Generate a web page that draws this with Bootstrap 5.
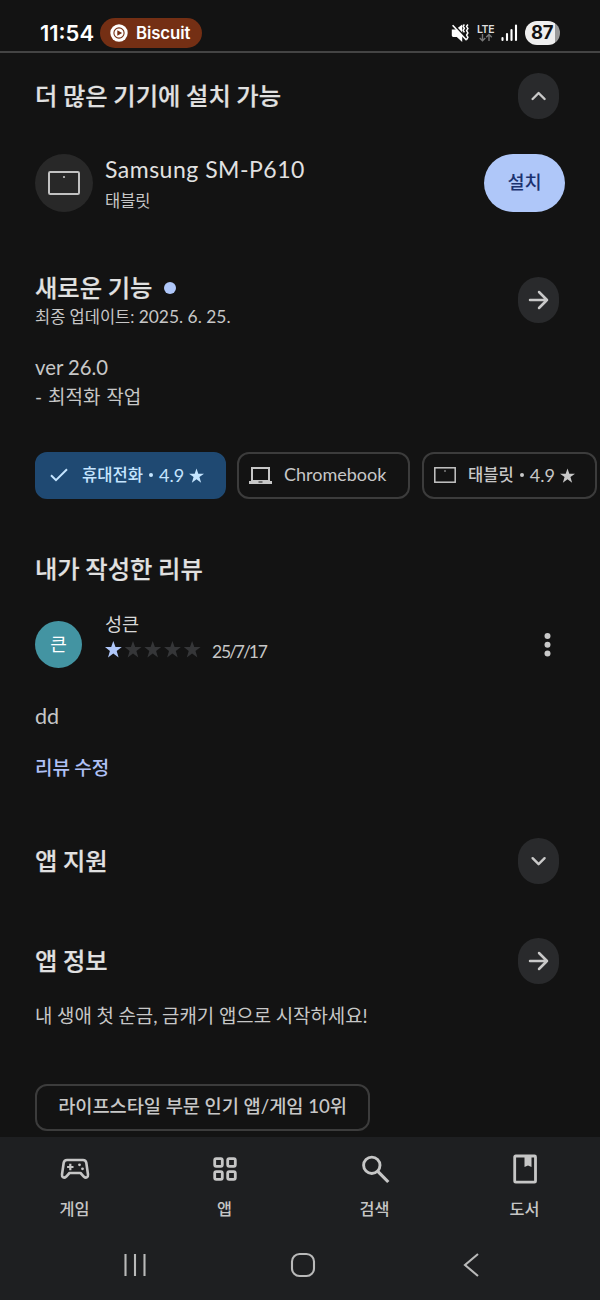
<!DOCTYPE html>
<html lang="ko" data-bs-theme="dark">
<head>
<meta charset="utf-8">
<meta name="viewport" content="width=device-width, initial-scale=1">
<title>앱 상세정보</title>
<link href="https://cdn.jsdelivr.net/npm/bootstrap@5.3.0/dist/css/bootstrap.min.css" rel="stylesheet">
<style>
body{width:600px;height:1300px;overflow:hidden;background:#131313;color:#c7c7c7;font-family:Lato,"Noto Sans CJK KR",sans-serif;white-space:nowrap}
svg{display:block;flex:none}
.statusbar{height:53px;border-bottom:2px solid #444;padding:14px 40px 0 40px;font-family:Inter,sans-serif;color:#fff}
.clock{font-size:22px;font-weight:600;letter-spacing:0;line-height:38px;width:60px}
.live-pill{width:102px;height:30px;margin-top:4px;background:#742f14;font-size:16.8px;font-weight:600;letter-spacing:-.1px;padding-left:10px}
.battery{width:35px;height:24px;margin-top:7px;background:linear-gradient(90deg,#eee 30px,#999 30px);color:#111;font-size:18.5px;font-weight:700;letter-spacing:-.5px;padding-right:1px}
.page-body{height:1084px;padding:0 35px}
.row-head{height:46px;padding-right:6px}
.title-text{font-size:24.3px;font-weight:500;color:#e1e1e1;line-height:32px;margin:0;word-spacing:-.5px;-webkit-text-stroke:.2px #e1e1e1}
.round-btn{width:41px;height:46px;border-radius:20.5px;background:#292a2c;color:#c9c9c9;border:0;padding:0}
.device-icon{width:58px;height:58px;background:#282828}
.device-name{font-size:23px;line-height:32px;letter-spacing:.5px;color:#e1e1e1}
.install{width:81px;height:58px;background:#afc7f9;color:#1c3270;font-size:18.6px;font-weight:500;border:0;padding:0}
.t16{font-size:16.5px;line-height:24px}
.t19{font-size:19px;line-height:29px}
.chip-box{height:47px;border:2px solid #3c3c3c;border-radius:12px;font-size:16.6px;line-height:24px}
.chip-box.on{background:#1f4972;border-color:#1f4972;color:#c5e5ff}
.num{font-size:18px;margin-top:-1px}
.chip-dot{width:4px;height:4px;background:currentColor;margin:0 6px 0 6px}
.avatar{width:47px;height:47px;margin-top:1px;background:#4394a2;color:#fff;font-size:18px}
.review-date{font-size:17.5px;letter-spacing:-1.2px;margin-left:11px;margin-top:4px}
.review-date i{font-style:normal;margin:0 -.9px}
.bottom-bar{height:163px;background:#1e1f21;color:#c6c6c6}
.tab-item{width:150px;font-size:16.3px;font-weight:500;line-height:24px;padding-right:1px}
.tab-item div{margin-top:12px}
</style>
</head>
<body class="d-flex flex-column">
<header class="statusbar d-flex align-items-start flex-shrink-0">
  <span class="clock">11:54</span>
  <span class="live-pill rounded-pill d-flex align-items-center">
    <svg width="18" height="18" viewBox="0 0 18 18"><circle cx="9" cy="9" r="8.7" fill="#fff"/><circle cx="9" cy="9" r="5.1" fill="none" stroke="#742f14" stroke-width="1.1"/><path d="M7.3 6.2v5.6l4.8-2.8z" fill="#742f14"/></svg>
    <span style="margin-left:8px;margin-top:1px">Biscuit</span>
  </span>
  <svg class="ms-auto" style="margin-top:7px" width="68" height="24" viewBox="0 0 68 24" fill="none" stroke="#fff">
    <path d="M.8 8.500h4L11.200 3.500v17.500L5.800 16H2.200q-1.400 0-1.400-1.400z" fill="#fff" stroke="none"/><path d="M2.800 3.600l13.400 14.500" stroke="#131313" stroke-width="1.600"/><path d="M1.600 4.300l14 15" stroke-width="1.600"/><path d="M13.400 3.500l-1.300 1.800 1.300 2 -1.300 2 1.300 2.100M16.900 3.500l-1.300 1.800 1.300 2.200-1.300 2.200 1.300 2.200-1.300 2.200 1.300 2.200-1.300 2.200" stroke-width="1.500"/>
    <text x="26" y="11.500" textLength="17.500" font-size="10.500" font-weight="600" fill="#ddd" stroke="none">LTE</text>
    <path d="M31.500 13v6.500M28.700 17l2.800 2.800 2.800-2.800M38 20v-6.500M35.200 16.200l2.800-2.800 2.800 2.800" stroke="#777" stroke-width="1.400"/>
    <path d="M51.500 17v2M56 13v6M60.500 9v10M65 4.500v14.500" stroke-width="2.100" stroke-linecap="round"/>
  </svg>
  <span class="battery rounded-pill d-flex align-items-center justify-content-center" style="margin-left:6px">87</span>
</header>

<main class="page-body flex-shrink-0">
  <section class="row-head d-flex align-items-center justify-content-between" style="margin-top:20px">
    <h2 class="title-text">더 많은 기기에 설치 가능</h2>
    <button class="round-btn d-flex align-items-center justify-content-center"><svg width="24" height="24" viewBox="0 0 24 24" fill="none" stroke="currentColor" stroke-width="2.4" stroke-linecap="round" stroke-linejoin="round"><path d="M5.600 15l6-6 6 6"/></svg></button>
  </section>
  <section class="d-flex align-items-center" style="margin-top:35.400px;height:58px">
    <span class="device-icon rounded-circle d-flex align-items-center justify-content-center"><svg width="32" height="24" viewBox="0 0 32 24"><rect x="1" y="1" width="30" height="22" rx="1.200" fill="none" stroke="#c2c2c2" stroke-width="2"/><circle cx="16" cy="6" r="1.100" fill="#c2c2c2"/></svg></span>
    <div style="margin-left:12px"><div class="device-name">Samsung SM-P610</div><div class="t16" style="margin-top:4px">태블릿</div></div>
    <button class="install rounded-pill ms-auto">설치</button>
  </section>
  <section class="row-head d-flex justify-content-between" style="margin-top:65px">
    <div><h2 class="title-text d-flex align-items-center" style="margin-top:-5px">새로운 기능<span class="rounded-circle d-block" style="width:12px;height:12px;background:#afc7f9;margin-left:12px"></span></h2><div class="t16" style="margin-top:1px">최종 업데이트: <span style="font-size:17.400px">2025. 6. 25.</span></div></div>
    <button class="round-btn d-flex align-items-center justify-content-center"><svg width="24" height="24" viewBox="0 0 24 24" fill="none" stroke="currentColor" stroke-width="2.500" stroke-linecap="round" stroke-linejoin="round"><path d="M3 12h17M12 4l8 8-8 8"/></svg></button>
  </section>
  <p class="t19 mb-0" style="margin-top:29.600px"><span style="font-size:20.300px">ver 26.0</span><br><span style="word-spacing:1px">- 최적화 작업</span></p>
  <section class="d-flex" style="margin-top:41px;width:565px">
    <div class="chip-box on d-flex align-items-center flex-shrink-0" style="width:191px;padding-left:13px"><svg width="18" height="14" viewBox="0 0 18 14" fill="none" stroke="currentColor" stroke-width="2"><path d="M1 7.200l5 5L17 1.200"/></svg><span style="margin-left:14px;font-weight:500">휴대전화</span><span class="chip-dot rounded-circle"></span><span class="num">4.9</span><svg style="margin-left:5px" width="15" height="15" viewBox="0 0 20 19" fill="currentColor"><path d="M10 0l2.400 7H20l-6.100 4.500L16.200 19 10 14.500 3.800 19l2.300-7.500L0 7h7.600z"/></svg></div>
    <div class="chip-box d-flex align-items-center flex-shrink-0" style="width:173px;margin-left:11px;padding-left:10px"><svg width="23" height="17" viewBox="0 0 23 17"><path fill="currentColor" fill-rule="evenodd" d="M2 0h19v14h2v3H0v-3h2zM4 2v11h15V2zM9.500 14.500v1h4v-1z"/></svg><span class="num" style="margin-left:12px;margin-top:-3px">Chromebook</span></div>
    <div class="chip-box d-flex align-items-center flex-shrink-0" style="width:175px;margin-left:12px;padding-left:10px"><svg width="22" height="16" viewBox="0 0 22 16"><rect x=".8" y=".8" width="20.400" height="14.400" fill="none" stroke="currentColor" stroke-width="1.500"/><circle cx="11" cy="4" r=".8" fill="currentColor"/></svg><span style="margin-left:12px;font-weight:500">태블릿</span><span class="chip-dot rounded-circle"></span><span class="num">4.9</span><svg style="margin-left:5px" width="15" height="15" viewBox="0 0 20 19" fill="currentColor"><path d="M10 0l2.400 7H20l-6.100 4.500L16.200 19 10 14.500 3.800 19l2.300-7.500L0 7h7.600z"/></svg></div>
  </section>
  <h2 class="title-text" style="margin-top:54px">내가 작성한 리뷰</h2>
  <section class="d-flex align-items-center" style="margin-top:35.500px;height:48px;padding-right:14px">
    <span class="avatar rounded-circle d-flex align-items-center justify-content-center">큰</span>
    <div style="margin-left:23px;margin-top:-16px"><div style="font-size:18.600px;line-height:28px;color:#d8d8d8">성큰</div>
      <div class="d-flex align-items-center" style="height:24px"><svg style="margin-top:-1px" width="96" height="17" viewBox="0 0 96 17"><defs><path id="st" d="M8.300 0l2.200 6h6.300l-5.100 4 1.900 6.400-5.300-3.800-5.300 3.800 1.900-6.400L0 6h6.200z"/></defs><use href="#st" fill="#afc7f9"/><g fill="#353638"><use href="#st" x="19.700"/><use href="#st" x="39.400"/><use href="#st" x="59.100"/><use href="#st" x="78.800"/></g></svg><span class="review-date">25<i>/</i>7<i>/</i>17</span></div></div>
    <svg class="ms-auto" style="margin-top:1px" width="8" height="26" viewBox="0 0 8 26" fill="#c9c9c9"><circle cx="4.500" cy="4" r="3"/><circle cx="4.500" cy="12.800" r="3"/><circle cx="4.500" cy="21.500" r="3"/></svg>
  </section>
  <p class="mb-0" style="margin-top:34px;font-size:21.500px;line-height:29px">dd</p>
  <a href="#" class="t19 d-block text-decoration-none" style="margin-top:21.500px;color:#afc0f5;font-weight:500;word-spacing:-.5px">리뷰 수정</a>
  <section class="row-head d-flex align-items-center justify-content-between" style="margin-top:56px">
    <h2 class="title-text">앱 지원</h2>
    <button class="round-btn d-flex align-items-center justify-content-center"><svg width="24" height="24" viewBox="0 0 24 24" fill="none" stroke="currentColor" stroke-width="2.400" stroke-linecap="round" stroke-linejoin="round"><path d="M5.600 9.200l6 6 6-6"/></svg></button>
  </section>
  <section class="row-head d-flex align-items-center justify-content-between" style="margin-top:54px">
    <h2 class="title-text">앱 정보</h2>
    <button class="round-btn d-flex align-items-center justify-content-center"><svg width="24" height="24" viewBox="0 0 24 24" fill="none" stroke="currentColor" stroke-width="2.500" stroke-linecap="round" stroke-linejoin="round"><path d="M3 12h17M12 4l8 8-8 8"/></svg></button>
  </section>
  <p class="t19 mb-0" style="margin-top:17px;font-size:18.900px;word-spacing:-.2px">내 생애 첫 순금, 금캐기 앱으로 시작하세요!</p>
  <div class="chip-box d-inline-flex align-items-center justify-content-center" style="margin-top:54px;width:335px;font-size:18.700px;font-weight:500;letter-spacing:-.05px;padding-bottom:2px">라이프스타일 부문 인기 앱/게임 10위</div>
</main>

<footer class="bottom-bar flex-shrink-0">
  <nav class="d-flex text-center" style="padding-top:16px">
    <div class="tab-item"><svg class="mx-auto" width="30" height="32" viewBox="0 0 30 32" fill="none" stroke="currentColor"><path d="M7 7h16c2 0 3 1 3.300 2.800L28 21.500c.4 3-2.200 4-4 2.300l-3.500-3.800h-11L6 23.800C4.200 25.500 1.600 24.500 2 21.500L3.700 9.800C4 8 5 7 7 7z" stroke-width="2.600" stroke-linejoin="round"/><path d="M10.300 10.800v6.400M7.100 14h6.400" stroke-width="2.200"/><g fill="currentColor" stroke="none"><circle cx="19.500" cy="11.800" r="1.400"/><circle cx="22.500" cy="15.800" r="1.400"/></g></svg><div>게임</div></div>
    <div class="tab-item"><svg class="mx-auto" width="30" height="32" viewBox="0 0 30 32" fill="none" stroke="currentColor" stroke-width="2.800"><rect x="4.700" y="5.700" width="7.600" height="7.600" rx="1.500"/><rect x="17.700" y="5.700" width="7.600" height="7.600" rx="1.500"/><rect x="4.700" y="18.700" width="7.600" height="7.600" rx="1.500"/><rect x="17.700" y="18.700" width="7.600" height="7.600" rx="1.500"/></svg><div>앱</div></div>
    <div class="tab-item"><svg class="mx-auto" width="30" height="32" viewBox="0 0 30 32" fill="none" stroke="currentColor" stroke-width="2.900"><circle cx="11.800" cy="12.300" r="8.200"/><path d="M17.800 18.300L28.300 29" stroke-width="3.200"/></svg><div>검색</div></div>
    <div class="tab-item"><svg class="mx-auto" width="30" height="32" viewBox="0 0 30 32" fill="none" stroke="currentColor" stroke-width="2.800"><rect x="4.700" y="3" width="20.800" height="26.200" rx="1"/><path d="M14.500 3h7v11L18 12.400 14.500 14z" fill="currentColor" stroke="none"/></svg><div>도서</div></div>
  </nav>
  <div class="d-flex align-items-center" style="height:28px;margin-top:30px;padding-left:121px">
    <svg width="28" height="26" viewBox="0 0 28 26" stroke="#b9b9b9" stroke-width="2.100"><path d="M4.500 2v22M14 2v22M23.500 2v22"/></svg>
    <svg style="margin-left:141px" width="26" height="26" viewBox="0 0 26 26" fill="none" stroke="#b9b9b9" stroke-width="2.100"><rect x="2" y="2" width="22" height="22" rx="7.500"/></svg>
    <svg style="margin-left:145px" width="20" height="26" viewBox="0 0 20 26" fill="none" stroke="#b9b9b9" stroke-width="2.100"><path d="M17 2L4 13l13 11"/></svg>
  </div>
</footer>
<script src="https://cdn.jsdelivr.net/npm/bootstrap@5.3.0/dist/js/bootstrap.bundle.min.js"></script>
</body>
</html>
